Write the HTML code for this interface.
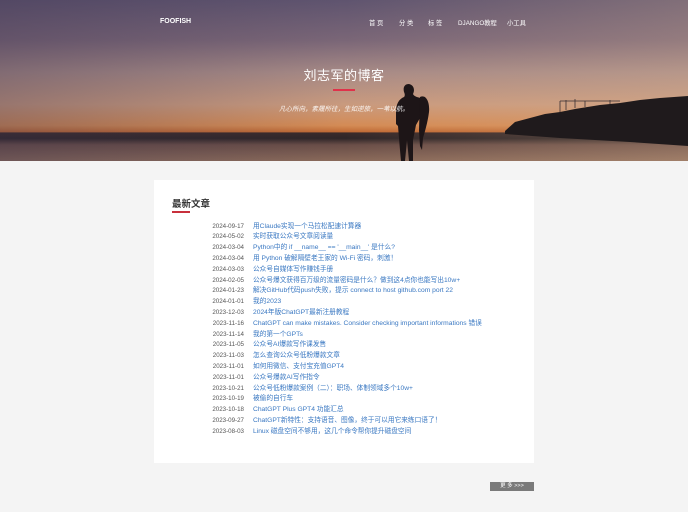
<!DOCTYPE html>
<html><head><meta charset="utf-8"><style>
*{margin:0;padding:0;box-sizing:border-box}
body{width:688px;height:512px;background:#f4f4f4;font-family:"Liberation Sans","Noto Sans CJK SC",sans-serif;position:relative;overflow:hidden}
.hero{position:absolute;left:0;top:0;width:688px;height:161px;background:linear-gradient(180deg,#5f546f 0%,#7a6677 25%,#a78a86 45%,#c99a7e 65%,#d48b55 78%,#c06a35 82%,#3a2a2a 82.5%,#2f2628 86%,#6a4e48 90%,#8a6a5a 100%);overflow:hidden}
.hero .lside{position:absolute;left:0;top:0;width:688px;height:161px;background:linear-gradient(90deg,rgba(60,50,80,.35),rgba(0,0,0,0) 50%,rgba(230,190,150,.25))}
.t{position:absolute;color:#fff;white-space:nowrap}
.card{position:absolute;left:154px;top:180px;width:380px;height:283px;background:#fff}
.row{position:absolute;left:0;font-size:6.7px;white-space:nowrap;line-height:8px}
.d{position:absolute;width:90px;left:0;text-align:right;color:#555;font-size:6.2px}
.a{position:absolute;left:99px;color:#3a78c2}
</style></head><body>
<div class="hero"><div class="lside"></div>
<svg width="688" height="161" style="position:absolute;left:0;top:0">
<path d="M505 131 L515 122 L530 118 L545 114 L560 112 L575 109 L600 105 L620 103 L640 100 L660 98 L688 96 L688 146 L630 142 L560 138 L505 134Z" fill="#1f1a1c"/>
<g stroke="#3a3033" stroke-width="0.8" fill="none"><path d="M560 112 V101 M566 110 V100 M575 108 V99 M585 107 V101 M560 101 H620 M610 104 V100"/></g>
<path d="M409 84 C404 84 403 88 404 92 C405 94 405 96 404 97 C399 99 396 104 396 112 L396 124 L398 126 L400 150 L401 161 L405 161 L407 140 L409 161 L413 161 L413 140 L416 125 L420 118 L427 114 L427 103 L425 97 L421 98 C416 97 414 96 413 94 C415 90 414 85 409 84Z" fill="#1d1517"/>
<path d="M420 97 C426 94 430 102 429 112 C428 120 426 128 423 138 L422 150 L420 146 L419 130Z" fill="#1d1517"/>
</svg>
<div class="t" style="left:160px;top:18px;font-size:7px;font-weight:bold">FOOFISH</div>
<div class="t" style="left:369px;top:18px;font-size:6.3px">首 页</div>
<div class="t" style="left:399px;top:18px;font-size:6.3px">分 类</div>
<div class="t" style="left:428px;top:18px;font-size:6.3px">标 签</div>
<div class="t" style="left:458px;top:18px;font-size:6.3px">DJANGO教程</div>
<div class="t" style="left:507px;top:18px;font-size:6.3px">小工具</div>
<div class="t" style="left:300px;top:65px;width:88px;text-align:center;font-size:13px;letter-spacing:.5px">刘志军的博客</div>
<div style="position:absolute;left:333px;top:89px;width:22px;height:1.5px;background:#e0324a"></div>
<div class="t" style="left:275px;top:103px;width:138px;text-align:center;font-size:6.5px;font-style:italic;opacity:.9">凡心所向，素履所往，生如逆旅，一苇以航。</div>
</div>
<div class="card">
<div style="position:absolute;left:18px;top:16px;font-size:9.5px;color:#333;font-weight:bold">最新文章</div>
<div style="position:absolute;left:18px;top:31px;width:18px;height:1.5px;background:#c8303c"></div>
<div class="row" style="top:42.5px"><span class="d">2024-09-17</span><span class="a">用Claude实现一个马拉松配速计算器</span></div>
<div class="row" style="top:53.3px"><span class="d">2024-05-02</span><span class="a">实时获取公众号文章阅读量</span></div>
<div class="row" style="top:64.1px"><span class="d">2024-03-04</span><span class="a">Python中的 if __name__ == '__main__' 是什么?</span></div>
<div class="row" style="top:74.9px"><span class="d">2024-03-04</span><span class="a">用 Python 破解隔壁老王家的 Wi-Fi 密码，刺激！</span></div>
<div class="row" style="top:85.7px"><span class="d">2024-03-03</span><span class="a">公众号自媒体写作赚钱手册</span></div>
<div class="row" style="top:96.5px"><span class="d">2024-02-05</span><span class="a">公众号爆文获得百万级的流量密码是什么？做到这4点你也能写出10w+</span></div>
<div class="row" style="top:107.3px"><span class="d">2024-01-23</span><span class="a">解决GitHub代码push失败，提示 connect to host github.com port 22</span></div>
<div class="row" style="top:118.1px"><span class="d">2024-01-01</span><span class="a">我的2023</span></div>
<div class="row" style="top:128.9px"><span class="d">2023-12-03</span><span class="a">2024年版ChatGPT最新注册教程</span></div>
<div class="row" style="top:139.7px"><span class="d">2023-11-16</span><span class="a">ChatGPT can make mistakes. Consider checking important informations 错误</span></div>
<div class="row" style="top:150.5px"><span class="d">2023-11-14</span><span class="a">我的第一个GPTs</span></div>
<div class="row" style="top:161.3px"><span class="d">2023-11-05</span><span class="a">公众号AI爆款写作课发售</span></div>
<div class="row" style="top:172.1px"><span class="d">2023-11-03</span><span class="a">怎么查询公众号低粉爆款文章</span></div>
<div class="row" style="top:182.9px"><span class="d">2023-11-01</span><span class="a">如何用微信、支付宝充值GPT4</span></div>
<div class="row" style="top:193.7px"><span class="d">2023-11-01</span><span class="a">公众号爆款AI写作指令</span></div>
<div class="row" style="top:204.5px"><span class="d">2023-10-21</span><span class="a">公众号低粉爆款案例（二）：职场、体制领域多个10w+</span></div>
<div class="row" style="top:215.3px"><span class="d">2023-10-19</span><span class="a">被偷的自行车</span></div>
<div class="row" style="top:226.1px"><span class="d">2023-10-18</span><span class="a">ChatGPT Plus GPT4 功能汇总</span></div>
<div class="row" style="top:236.9px"><span class="d">2023-09-27</span><span class="a">ChatGPT新特性：支持语音、图像，终于可以用它来练口语了！</span></div>
<div class="row" style="top:247.7px"><span class="d">2023-08-03</span><span class="a">Linux 磁盘空间不够用，这几个命令帮你提升磁盘空间</span></div>
</div>
<div style="position:absolute;left:490px;top:482px;width:44px;height:9px;background:#7a7a7a;color:#fff;font-size:5.5px;line-height:9px;text-align:center">更 多 &gt;&gt;&gt;</div>
</body></html>
